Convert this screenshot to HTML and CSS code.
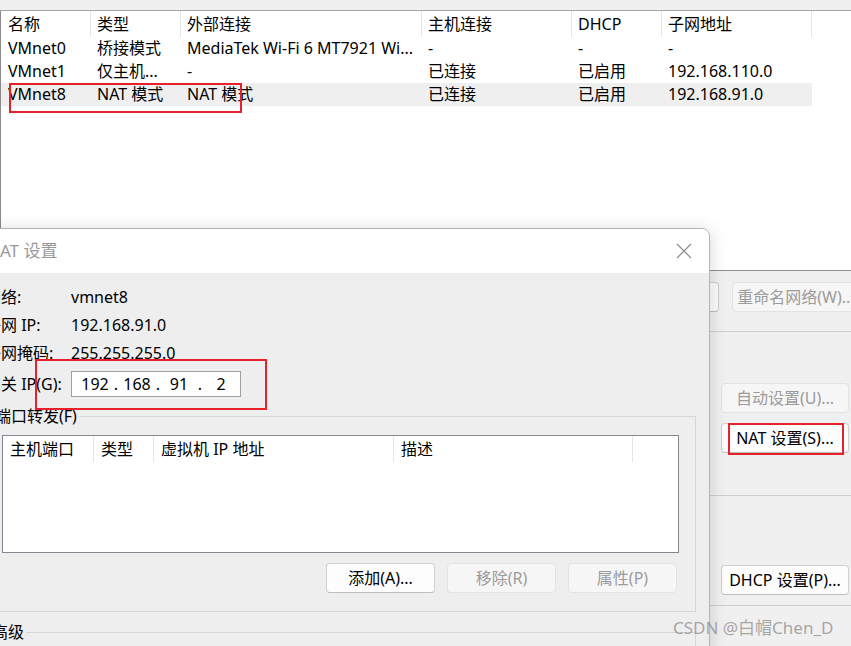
FILE: index.html
```html
<!DOCTYPE html>
<html lang="zh-CN">
<head>
<meta charset="utf-8">
<title>虚拟网络编辑器 - NAT 设置</title>
<link rel="stylesheet" href="styles.css">
</head>
<body>
<div class="window">
  <div class="topstrip"></div>
  <div class="netlist">
    <div class="row head">
      <div class="cell">名称</div>
      <div class="cell">类型</div>
      <div class="cell">外部连接</div>
      <div class="cell">主机连接</div>
      <div class="cell">DHCP</div>
      <div class="cell">子网地址</div>
    </div>
    <div class="row">
      <div class="cell">VMnet0</div>
      <div class="cell">桥接模式</div>
      <div class="cell">MediaTek Wi-Fi 6 MT7921 Wi...</div>
      <div class="cell">-</div>
      <div class="cell">-</div>
      <div class="cell">-</div>
    </div>
    <div class="row">
      <div class="cell">VMnet1</div>
      <div class="cell">仅主机...</div>
      <div class="cell">-</div>
      <div class="cell">已连接</div>
      <div class="cell">已启用</div>
      <div class="cell">192.168.110.0</div>
    </div>
    <div class="row selected">
      <div class="cell">VMnet8</div>
      <div class="cell">NAT 模式</div>
      <div class="cell">NAT 模式</div>
      <div class="cell">已连接</div>
      <div class="cell">已启用</div>
      <div class="cell">192.168.91.0</div>
    </div>
  </div>
  <div class="lower">
    <div class="row-top">
      <button class="btn">移除网络(O)</button>
      <button class="btn disabled">重命名网络(W)...</button>
    </div>
    <div class="sep sep-1"></div>
    <div class="btn-col col-1">
      <button class="btn disabled">自动设置(U)...</button>
      <button class="btn">NAT 设置(S)...</button>
    </div>
    <div class="sep sep-2"></div>
    <div class="btn-col col-2">
      <button class="btn">DHCP 设置(P)...</button>
    </div>
    <div class="sep sep-3"></div>
  </div>
</div>

<div class="dialog">
  <div class="dialog-title">
    <span>NAT 设置</span>
    <svg class="close" width="16" height="16" viewBox="0 0 16 16"><path d="M1 1 L15 15 M15 1 L1 15" stroke="#8a8a8a" stroke-width="1.2" fill="none"/></svg>
  </div>
  <div class="dialog-body">
    <div class="info">
      <div class="lbl">网络:</div><div class="val">vmnet8</div>
      <div class="lbl">子网 IP:</div><div class="val">192.168.91.0</div>
      <div class="lbl">子网掩码:</div><div class="val">255.255.255.0</div>
      <div class="lbl">网关 IP(G):</div>
      <div class="ipbox">
        <span class="oct">192</span><span class="dot">.</span>
        <span class="oct">168</span><span class="dot">.</span>
        <span class="oct">91</span><span class="dot">.</span>
        <span class="oct">2</span>
      </div>
    </div>
    <fieldset class="group group-fwd">
      <legend>端口转发(F)</legend>
      <div class="fwd-list">
        <div class="fwd-head">
          <div class="fcell">主机端口</div>
          <div class="fcell">类型</div>
          <div class="fcell">虚拟机 IP 地址</div>
          <div class="fcell">描述</div>
        </div>
      </div>
      <div class="fwd-buttons">
        <button class="btn">添加(A)...</button>
        <button class="btn disabled">移除(R)</button>
        <button class="btn disabled">属性(P)</button>
      </div>
    </fieldset>
    <fieldset class="group group-adv">
      <legend>高级</legend>
    </fieldset>
  </div>
</div>

<div class="mark mark-row"></div>
<div class="mark mark-gw"></div>
<div class="mark mark-nat"></div>
<div class="watermark">CSDN @白帽Chen_D</div>
</body>
</html>
```

FILE: styles.css
```css
* { box-sizing: border-box; }
html, body { margin: 0; padding: 0; }
body {
  width: 851px;
  height: 646px;
  overflow: hidden;
  position: relative;
  background: #f0f0f0;
  font-family: "Noto Sans", "Noto Sans CJK SC", sans-serif;
  font-size: 16px;
  line-height: 20px;
  color: #000;
}

.window { display: flex; flex-direction: column; height: 646px; }
.topstrip { height: 11px; background: #f0f0f0; border-bottom: 1px solid #a3a3a3; }

.netlist {
  height: 260px;
  background: #fff;
  border-left: 1px solid #8a8a8a;
  border-bottom: 1px solid #8e9096;
}
.row {
  display: grid;
  grid-template-columns: 90px 90px 241px 150px 90px 150px;
  width: 811px;
  height: 23px;
  line-height: 23px;
}
.row.head { height: 26px; line-height: 26px; }
.row.head .cell { border-right: 1px solid #e5e5e5; }
.row.selected { background: #efefef; }
.cell { padding-left: 6px; white-space: nowrap; overflow: hidden; }
.row .cell:first-child { padding-left: 7px; }

.lower { flex: 1; background: #f0f0f0; padding-top: 11px; }
.row-top { display: flex; justify-content: flex-end; gap: 13px; margin-right: -9px; }
.sep { border-top: 1px solid #cfcfcf; }
.sep-1 { margin-top: 19px; }
.sep-2 { margin-top: 42px; }
.sep-3 { margin-top: 10px; }
.btn-col { display: flex; flex-direction: column; gap: 10px; width: 128px; margin-left: auto; margin-right: 2px; }
.col-1 { margin-top: 51px; }
.col-2 { margin-top: 69px; }

.btn {
  font: inherit;
  width: 128px;
  height: 30px;
  padding: 0;
  background: #fdfdfd;
  border: 1px solid #d0d0d0;
  border-bottom-color: #bdbdbd;
  border-radius: 4px;
  color: #000;
  white-space: nowrap;
  overflow: hidden;
}
.btn.disabled { background: #f6f6f6; border-color: #e3e3e3; color: #9b9b9b; }

.dialog {
  position: absolute;
  left: -30px;
  top: 228px;
  width: 740px;
  height: 440px;
  background: #eeeeee;
  border: 1px solid #b4b4b4;
  border-radius: 0 8px 0 0;
  box-shadow: 0 2px 18px rgba(0, 0, 0, 0.16);
  overflow: hidden;
}
.dialog-title {
  height: 44px;
  background: #fff;
  display: flex;
  align-items: center;
  justify-content: space-between;
  padding: 0 17px 0 16px;
  color: #999;
  font-size: 17px;
}
.dialog-body { padding: 14px 13px 0 14px; }

.info {
  display: grid;
  grid-template-columns: 86px 170px;
  grid-template-rows: 20px 20px 20px 26px;
  row-gap: 8px;
  align-items: center;
}
.lbl { white-space: nowrap; }
.ipbox {
  height: 26px;
  background: #fff;
  border: 1px solid #a0a0a0;
  display: flex;
  align-items: center;
  padding-left: 5px;
}
.oct { width: 36px; text-align: center; }
.dot { width: 6px; text-align: center; }

.group {
  margin: 9px 0 0 5px;
  border: 1px solid #d6d6d6;
  padding: 0 16px 18px 11px;
  min-width: 0;
}
.group legend { padding: 0 2px 0 1px; margin-left: -8px; line-height: 20px; }
.group-fwd { padding-top: 9px; }
.group-adv { margin-top: 10px; height: 60px; }
.group-adv legend { margin-left: -11px; }

.fwd-list { height: 118px; background: #fff; border: 1px solid #828790; }
.fwd-head {
  display: grid;
  grid-template-columns: 91px 60px 240px 239px;
  height: 26px;
  line-height: 26px;
}
.fcell { padding-left: 7px; border-right: 1px solid #e5e5e5; white-space: nowrap; }
.fwd-buttons { display: flex; justify-content: flex-end; gap: 12px; margin-top: 10px; padding-right: 2px; }
.fwd-buttons .btn { width: 109px; }

.mark { position: absolute; border: 2px solid #e8202a; }
.mark-row { left: 9px; top: 83px; width: 233px; height: 30px; }
.mark-gw { left: 35px; top: 359px; width: 232px; height: 51px; }
.mark-nat { left: 728px; top: 423px; width: 116px; height: 32px; }

.watermark {
  position: absolute;
  left: 673px;
  top: 617px;
  font-size: 17px;
  line-height: 22px;
  color: rgba(140, 140, 140, 0.75);
  white-space: nowrap;
}
```
